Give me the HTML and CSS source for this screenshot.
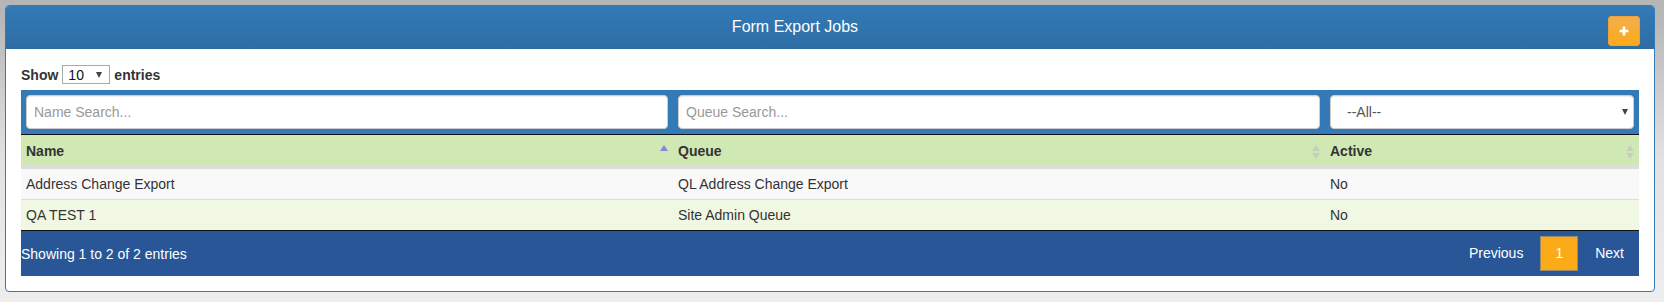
FILE: index.html
```html
<!DOCTYPE html>
<html>
<head>
<title>Form Export Jobs</title>
<link rel="stylesheet" href="styles.css">
</head>
<body>
<div class="panel">
  <div class="panel-heading">
    <h3 class="panel-title">Form Export Jobs</h3>
    <div class="panel-tools">
      <button class="btn-add" title="Add">
        <svg width="10" height="10" viewBox="0 0 10 10"><path d="M5 0.5v9M0.5 5h9" stroke="#fff" stroke-width="2.6"/></svg>
      </button>
    </div>
  </div>
  <div class="panel-body">
    <div class="dt-length">
      <label>Show <span class="select-wrap len"><select><option>10</option></select></span> entries</label>
    </div>
    <table class="dt">
      <colgroup>
        <col class="c-name">
        <col class="c-queue">
        <col class="c-active">
      </colgroup>
      <thead>
        <tr class="filter-row">
          <th><input class="inp" placeholder="Name Search..."></th>
          <th><input class="inp" placeholder="Queue Search..."></th>
          <th><span class="select-wrap all"><select><option>--All--</option></select></span></th>
        </tr>
        <tr class="head-row">
          <th class="sort-asc">Name</th>
          <th class="sort-both">Queue</th>
          <th class="sort-both">Active</th>
        </tr>
      </thead>
      <tbody>
        <tr class="odd">
          <td>Address Change Export</td>
          <td>QL Address Change Export</td>
          <td>No</td>
        </tr>
        <tr class="even">
          <td>QA TEST 1</td>
          <td>Site Admin Queue</td>
          <td>No</td>
        </tr>
      </tbody>
    </table>
    <div class="dt-footer">
      <div class="dt-info">Showing 1 to 2 of 2 entries</div>
      <div class="dt-paginate">
        <a class="pg">Previous</a>
        <a class="pg current">1</a>
        <a class="pg">Next</a>
      </div>
    </div>
  </div>
</div>
</body>
</html>
```

FILE: styles.css
```css
html, body {
  height: 100%;
}
body {
  margin: 5px 9px 0 5px;
  font-family: "Liberation Sans", Arial, sans-serif;
  font-size: 14px;
  color: #333;
  background: linear-gradient(#b5b5b5 0, #b8b8b8 20px, #e2e2e2 160px, #eeeeee 302px);
}

.panel {
  background-color: #fff;
  border: 1px solid #337ab7;
  border-radius: 4px;
}
.panel-heading {
  display: flex;
  height: 43px;
  background: linear-gradient(#337ab7, #2e6da4);
  border-radius: 3px 3px 0 0;
}
.panel-title {
  flex: 1;
  margin: 0;
  line-height: 41px;
  text-align: center;
  font-size: 16px;
  font-weight: normal;
  color: #fff;
}
.panel-tools {
  width: 70px;
  display: flex;
  justify-content: flex-end;
  align-items: flex-start;
}
.btn-add {
  margin: 10px 14px 0 0;
  width: 32px;
  height: 30px;
  padding: 0;
  border: 1px solid #eea236;
  border-radius: 3px;
  background: linear-gradient(#f2ae4d, #fbab18);
  display: flex;
  align-items: center;
  justify-content: center;
  cursor: pointer;
}

.panel-body {
  padding: 15px;
}

.dt-length {
  height: 26px;
  font-weight: bold;
}
.dt-length label {
  display: flex;
  align-items: center;
  height: 21px;
  gap: 4px;
}
.select-wrap {
  position: relative;
  display: inline-block;
}
.select-wrap select {
  -webkit-appearance: none;
  appearance: none;
  font-family: "Liberation Sans", Arial, sans-serif;
  font-size: 14px;
  background-color: #fff;
  outline: none;
}
.select-wrap::after {
  content: "";
  position: absolute;
  top: 50%;
  border-left: 3.5px solid transparent;
  border-right: 3.5px solid transparent;
  border-top: 6px solid #444;
  margin-top: -3px;
  pointer-events: none;
}
.len select {
  width: 48px;
  height: 19px;
  padding: 0 0 0 5px;
  border: 1px solid #a9a9a9;
  border-radius: 0;
  color: #111;
  font-weight: normal;
}
.len::after {
  right: 8px;
}
.all {
  display: block;
}
.all select {
  width: 100%;
  height: 34px;
  padding: 0 0 0 16px;
  border: 1px solid #ccc;
  border-radius: 4px;
  color: #555;
  box-shadow: inset 0 1px 1px rgba(0, 0, 0, .075);
}
.all::after {
  right: 6px;
}

.dt {
  width: 100%;
  table-layout: fixed;
  border-collapse: collapse;
}
.c-name, .c-queue {
  width: 652px;
}
.dt th, .dt td {
  text-align: left;
  line-height: 20px;
  padding: 5px;
}
.filter-row th {
  background-color: #337ab7;
  border-bottom: 1px solid #111;
}
.inp {
  display: block;
  box-sizing: border-box;
  width: 100%;
  height: 34px;
  padding: 6px 7px;
  border: 1px solid #ccc;
  border-radius: 4px;
  box-shadow: inset 0 1px 1px rgba(0, 0, 0, .075);
  font-family: "Liberation Sans", Arial, sans-serif;
  font-size: 14px;
  color: #555;
}
.inp::placeholder {
  color: #999;
}
.head-row th {
  position: relative;
  padding: 6px 5px 5px;
  background-color: #d0e9b4;
  border-bottom: 3px solid #ddd;
  font-weight: bold;
}
.sort-asc::after {
  content: "";
  position: absolute;
  right: 5px;
  top: 10px;
  border-left: 4px solid transparent;
  border-right: 4px solid transparent;
  border-bottom: 6px solid #8585dd;
}
.sort-both::before,
.sort-both::after {
  content: "";
  position: absolute;
  right: 5px;
  border-left: 4px solid transparent;
  border-right: 4px solid transparent;
}
.sort-both::before {
  top: 10px;
  border-bottom: 6px solid #c4cfbc;
}
.sort-both::after {
  top: 18px;
  border-top: 6px solid #c4cfbc;
}
.dt tbody tr.odd td {
  background-color: #f9f9f9;
  border-bottom: 1px solid #ddd;
}
.dt tbody tr.even td {
  background-color: #f0f8e4;
  border-bottom: 1px solid #111;
}

.dt-footer {
  display: flex;
  justify-content: space-between;
  align-items: center;
  height: 45px;
  background-color: #285696;
  color: #fff;
}
.dt-paginate {
  display: flex;
  align-items: center;
}
.pg {
  box-sizing: border-box;
  height: 35px;
  line-height: 33px;
  padding: 0 14px;
  margin-left: 2px;
  border: 1px solid transparent;
  color: #fff;
  cursor: pointer;
}
.pg.current {
  min-width: 37px;
  text-align: center;
  background-color: #fbab18;
  border-color: #9c8a6a;
}
```
